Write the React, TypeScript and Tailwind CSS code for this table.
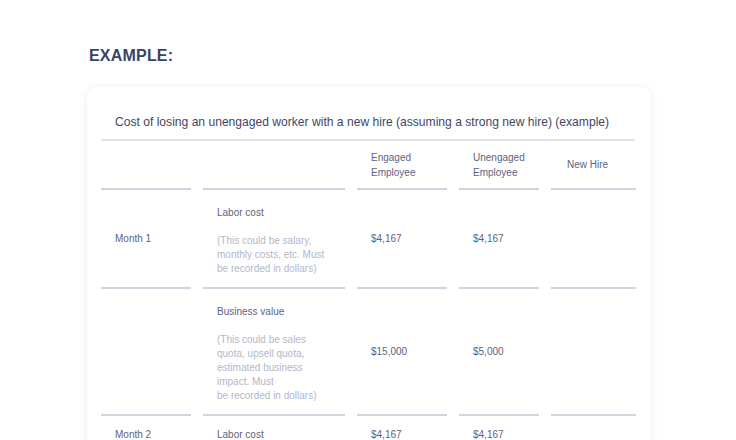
import React from 'react'

type Row = {
  month?: string
  label: string
  note?: string[]
  engaged: string
  unengaged: string
  newHire?: string
  top?: boolean
}

const rows: Row[] = [
  {
    month: 'Month 1',
    label: 'Labor cost',
    note: ['(This could be salary,', 'monthly costs, etc. Must', 'be recorded in dollars)'],
    engaged: '$4,167',
    unengaged: '$4,167',
  },
  {
    label: 'Business value',
    note: ['(This could be sales', 'quota, upsell quota,', 'estimated business', 'impact. Must', 'be recorded in dollars)'],
    engaged: '$15,000',
    unengaged: '$5,000',
  },
  {
    month: 'Month 2',
    label: 'Labor cost',
    note: ['(This could be salary,', 'monthly costs, etc. Must', 'be recorded in dollars)'],
    engaged: '$4,167',
    unengaged: '$4,167',
    top: true,
  },
]

const cell = 'border-b-2 border-[#d3d4e2] pl-[14px] pr-2 text-[10px] leading-[14px] text-[#5d627f]'

export default function App() {
  return (
    <div
      className="w-[736px] h-[440px] overflow-hidden bg-white"
      style={{ fontFamily: '"Liberation Sans", Arial, sans-serif' }}
    >
      <div className="pl-[87px] pt-[45px]">
        <h2 className="pl-[2px] text-[16px] leading-[22px] font-bold tracking-[0.2px] text-[#3a4268]">EXAMPLE:</h2>

        <div className="mt-[20px] w-[564px] rounded-[10px] bg-white pl-[14px] pr-[16px] pt-[26px] pb-6 shadow-[0_1px_10px_rgba(40,45,80,0.09)]">
          <div className="pl-[14px] whitespace-nowrap text-[12.1px] leading-[18px] text-[#3f4566]">
            Cost of losing an unengaged worker with a new hire (assuming a strong new hire) (example)
          </div>
          <div className="mt-[8px] h-[2px] bg-[#e2e3e9]" />

          <div className="grid grid-cols-[90px_142px_90px_80px_85px] gap-x-[12px]">
            {/* header */}
            <div className={`${cell} h-[49px]`} />
            <div className={`${cell} h-[49px]`} />
            <div className={`${cell} h-[49px] flex flex-col justify-center leading-[15px]`}>
              <span>Engaged</span>
              <span>Employee</span>
            </div>
            <div className={`${cell} h-[49px] flex flex-col justify-center leading-[15px]`}>
              <span>Unengaged</span>
              <span>Employee</span>
            </div>
            <div className={`${cell} h-[49px] flex flex-col justify-center leading-[15px] !pl-[16px]`}>
              <span>New Hire</span>
            </div>

            {rows.map((r, i) => {
              const v = r.top ? `${cell} pt-[12px]` : `${cell} flex items-center`
              return (
                <React.Fragment key={i}>
                  <div className={v}>{r.month}</div>
                  <div className={`${cell} ${r.top ? 'pt-[12px]' : 'pt-[16px]'} pb-[11px]`}>
                    <div>{r.label}</div>
                    {r.note && (
                      <div className="mt-[14px] text-[#b4b6c9]">
                        {r.note.map((l, j) => (
                          <div key={j}>{l}</div>
                        ))}
                      </div>
                    )}
                  </div>
                  <div className={v}>{r.engaged}</div>
                  <div className={v}>{r.unengaged}</div>
                  <div className={v}>{r.newHire}</div>
                </React.Fragment>
              )
            })}
          </div>
        </div>
      </div>
    </div>
  )
}
